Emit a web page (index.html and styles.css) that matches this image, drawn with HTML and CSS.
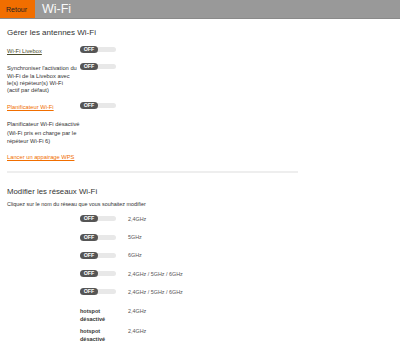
FILE: index.html
```html
<!DOCTYPE html>
<html lang="fr">
<head>
<meta charset="utf-8">
<title>Wi-Fi</title>
<link rel="stylesheet" href="styles.css">
</head>
<body>
<header class="topbar">
  <a class="back">Retour</a>
  <h1 class="page-title">Wi-Fi</h1>
</header>
<main class="content">
  <h2 class="section-title">Gérer les antennes Wi-Fi</h2>
  <div class="setting s-livebox">
    <span class="label"><a class="link-dark">Wi-Fi Livebox</a></span>
    <span class="toggle"><span class="knob">OFF</span></span>
  </div>
  <div class="setting s-sync">
    <span class="label text">Synchroniser l'activation du<br>Wi-Fi de la Livebox avec<br>le(s) répéteur(s) Wi-Fi<br>(actif par défaut)</span>
    <span class="toggle"><span class="knob">OFF</span></span>
  </div>
  <div class="setting s-plan">
    <span class="label"><a class="link-orange">Planificateur Wi-Fi</a></span>
    <span class="toggle"><span class="knob">OFF</span></span>
  </div>
  <p class="note">Planificateur Wi-Fi désactivé<br>(Wi-Fi pris en charge par le<br>répéteur Wi-Fi 6)</p>
  <p class="wps"><a class="link-orange">Lancer un appairage WPS</a></p>
  <hr class="divider">
  <h2 class="section-title second">Modifier les réseaux Wi-Fi</h2>
  <p class="hint">Cliquez sur le nom du réseau que vous souhaitez modifier</p>
  <div class="networks">
    <div class="net"><span class="toggle"><span class="knob">OFF</span></span><span class="band">2,4GHz</span></div>
    <div class="net"><span class="toggle"><span class="knob">OFF</span></span><span class="band">5GHz</span></div>
    <div class="net"><span class="toggle"><span class="knob">OFF</span></span><span class="band">6GHz</span></div>
    <div class="net"><span class="toggle"><span class="knob">OFF</span></span><span class="band">2,4GHz / 5GHz / 6GHz</span></div>
    <div class="net"><span class="toggle"><span class="knob">OFF</span></span><span class="band">2,4GHz / 5GHz / 6GHz</span></div>
    <div class="net hot first-hot"><span class="status">hotspot<br>désactivé</span><span class="band">2,4GHz</span></div>
    <div class="net hot"><span class="status">hotspot<br>désactivé</span><span class="band">2,4GHz</span></div>
  </div>
</main>
</body>
</html>
```
FILE: styles.css
```css
* { box-sizing: border-box; }
body {
  margin: 0;
  font-family: "Liberation Sans", Arial, sans-serif;
  color: #333;
  background: #fff;
}
.topbar {
  display: flex;
  align-items: stretch;
  height: 19px;
  background: #999;
  border-bottom: 1px solid #8a8a8a;
}
.back {
  display: flex;
  align-items: center;
  background: #f16e00;
  color: #222;
  font-size: 7px;
  padding: 0 6px;
  width: 35px;
}
.page-title {
  margin: 0 0 0 7px;
  font-size: 12.5px;
  font-weight: normal;
  color: #fafafa;
  line-height: 18px;
}
.content {
  padding: 0 7px;
  width: 305px;
}
.section-title {
  font-size: 8px;
  font-weight: normal;
  color: #333;
  margin: 9px 0 0;
  line-height: 10px;
}
.section-title.second { margin-top: 14.5px; font-size: 7.8px; }
.setting {
  display: grid;
  grid-template-columns: 73px auto;
  align-items: start;
}
.s-livebox { margin-top: 7.5px; }
.s-livebox .label { padding-top: 1.5px; }
.s-sync { margin-top: 8px; }
.s-sync .label { padding-top: 2.4px; line-height: 7.2px; }
.s-plan { margin-top: 7.8px; }
.s-plan .label { padding-top: 1px; }
.label {
  font-size: 5.75px;
  line-height: 8px;
}
.link-dark {
  color: #4a4a2a;
  text-decoration: underline;
}
.link-orange {
  color: #f16e00;
  text-decoration: underline;
}
.text { color: #333; }
.toggle {
  position: relative;
  display: inline-flex;
  align-items: center;
  width: 36px;
  height: 7px;
}
.toggle::before {
  content: "";
  position: absolute;
  left: 6px;
  right: 0;
  top: 1px;
  height: 5px;
  border-radius: 3px;
  background: #e8e8e8;
}
.knob {
  position: relative;
  width: 18px;
  height: 7px;
  border-radius: 4px;
  background: #555;
  color: #fff;
  font-size: 5.3px;
  font-weight: bold;
  line-height: 7px;
  text-align: center;
}
.note {
  margin: 9.45px 0 0;
  font-size: 5.75px;
  line-height: 8.5px;
  color: #333;
}
.wps {
  margin: 7.35px 0 0;
  font-size: 5.75px;
  line-height: 8px;
}
.divider {
  border: 0;
  height: 2px;
  background: #eee;
  margin: 9.7px 0 0;
}
.hint {
  margin: 3px 0 0;
  font-size: 5.4px;
  line-height: 8px;
  color: #333;
}
.networks {
  padding-left: 73px;
  margin-top: 1.2px;
}
.net {
  display: grid;
  grid-template-columns: 48px auto;
  align-items: center;
  height: 18.3px;
}
.band {
  font-size: 5.4px;
  color: #555;
}
.net.hot {
  align-items: start;
  height: 20px;
}
.net.first-hot { margin-top: 6.2px; }
.status {
  font-size: 5.5px;
  font-weight: bold;
  line-height: 8px;
  color: #333;
}
.net.hot .band { line-height: 8px; }
```
